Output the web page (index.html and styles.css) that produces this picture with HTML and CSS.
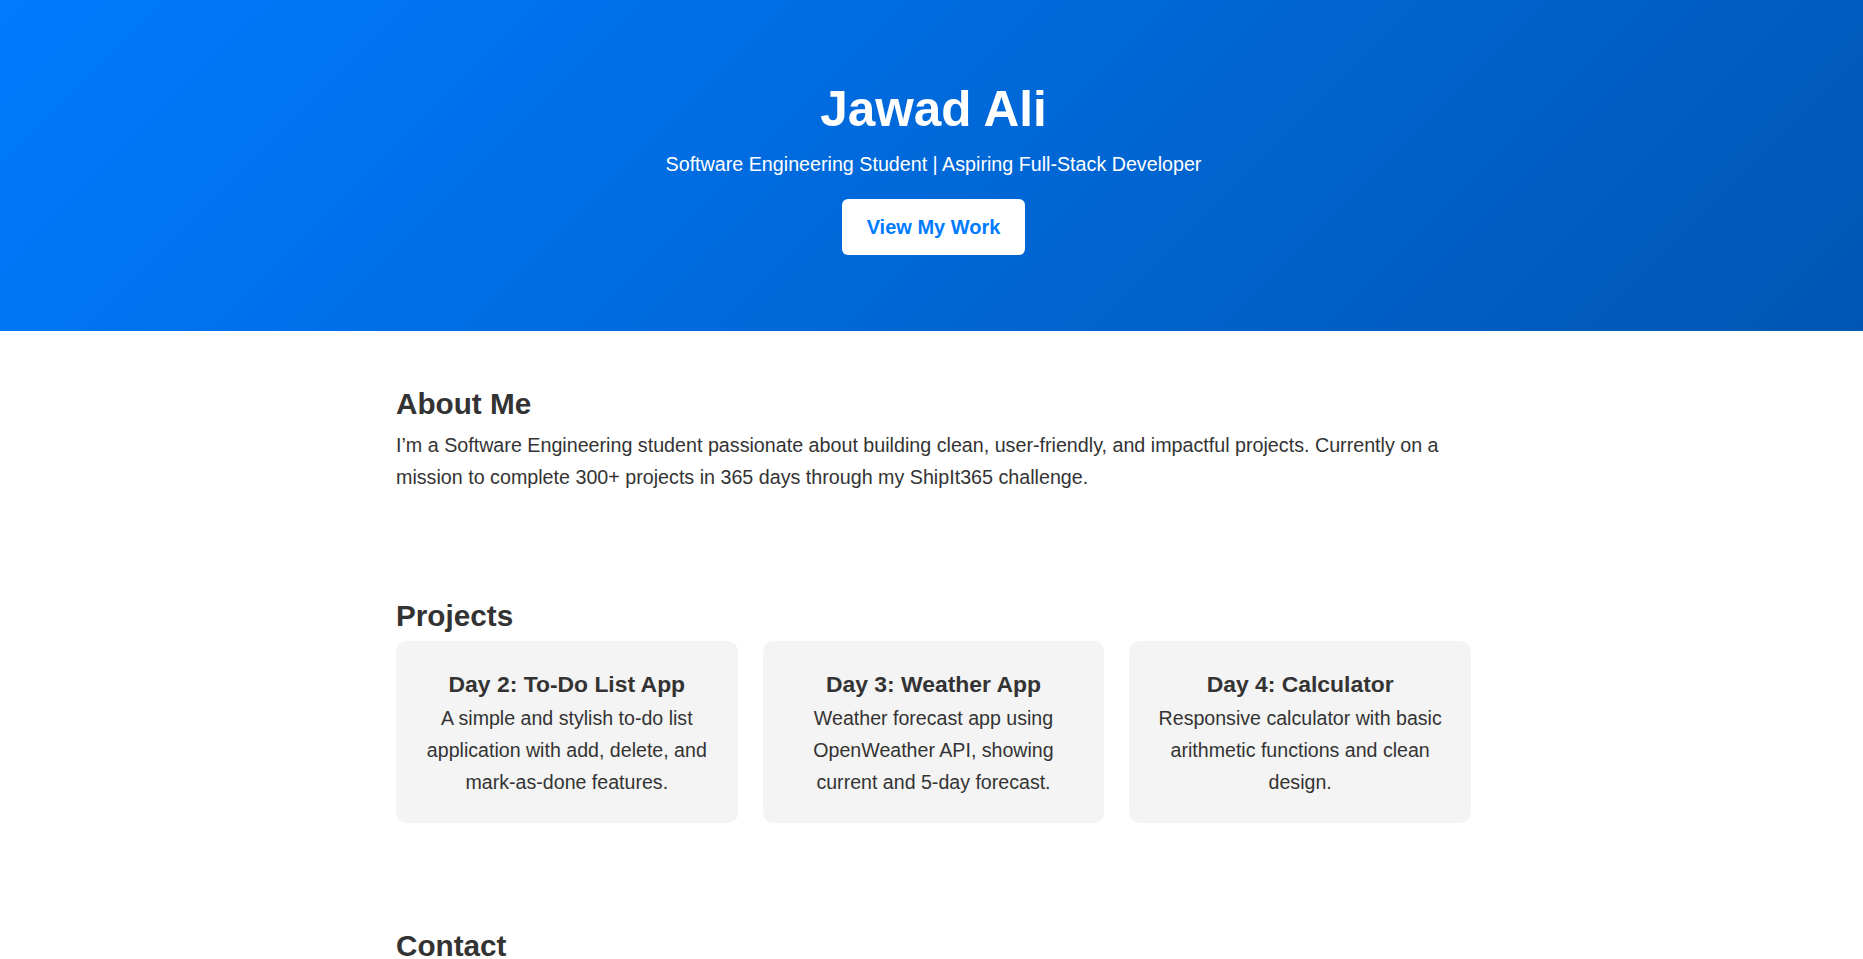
FILE: index.html
```html
<!DOCTYPE html>
<html lang="en">
<head>
<meta charset="UTF-8">
<title>Jawad Ali | Portfolio</title>
<link rel="stylesheet" href="styles.css">
</head>
<body>
  <header class="hero">
    <h1 class="hero-title">Jawad Ali</h1>
    <p class="hero-subtitle">Software Engineering Student | Aspiring Full-Stack Developer</p>
    <a class="hero-button" href="#projects">View My Work</a>
  </header>

  <main class="main">
    <section class="section" id="about">
      <h2 class="section-title">About Me</h2>
      <p class="section-text">I’m a Software Engineering student passionate about building clean, user-friendly, and impactful projects. Currently on a mission to complete 300+ projects in 365 days through my ShipIt365 challenge.</p>
    </section>

    <section class="section" id="projects">
      <h2 class="section-title">Projects</h2>
      <div class="project-grid">
        <div class="project-card">
          <h3 class="project-title">Day 2: To-Do List App</h3>
          <p class="project-text">A simple and stylish to-do list application with add, delete, and mark-as-done features.</p>
        </div>
        <div class="project-card">
          <h3 class="project-title">Day 3: Weather App</h3>
          <p class="project-text">Weather forecast app using OpenWeather API, showing current and 5-day forecast.</p>
        </div>
        <div class="project-card">
          <h3 class="project-title">Day 4: Calculator</h3>
          <p class="project-text">Responsive calculator with basic arithmetic functions and clean design.</p>
        </div>
      </div>
    </section>

    <section class="section" id="contact">
      <h2 class="section-title">Contact</h2>
    </section>
  </main>
</body>
</html>
```

FILE: styles.css
```css
* {
  box-sizing: border-box;
}

html, body {
  margin: 0;
  padding: 0;
}

body {
  font-family: "Liberation Sans", Arial, sans-serif;
  color: #333;
  background: #fff;
  font-size: 19.6px;
  line-height: 32px;
}

.hero {
  background: linear-gradient(135deg, #007bff, #0056b3);
  color: #fff;
  text-align: center;
  padding: 80px 0 76px 4px;
  display: flex;
  flex-direction: column;
  align-items: center;
}

.hero-title {
  margin: 0;
  font-size: 49.5px;
  font-weight: bold;
  line-height: 57.5px;
}

.hero-subtitle {
  margin: 15px 0 0;
  font-size: 19.7px;
  line-height: 23px;
}

.hero-button {
  margin-top: 23.5px;
  display: inline-block;
  background: #fff;
  color: #007bff;
  font-size: 20px;
  font-weight: bold;
  line-height: 24px;
  padding: 16px 25px;
  border-radius: 6px;
  text-decoration: none;
}

.main {
  padding: 56px 0 0 4px;
}

.section {
  max-width: 1075px;
  margin: 0 auto 105.5px;
}

.section-title {
  margin: 0 0 7.5px;
  font-size: 29.7px;
  font-weight: bold;
  line-height: 34.5px;
  color: #333;
}

.section-text {
  margin: 0;
  font-size: 19.7px;
  line-height: 32px;
}

.project-grid {
  display: grid;
  grid-template-columns: repeat(3, 1fr);
  gap: 25px;
}

.project-card {
  background: #f4f4f4;
  border-radius: 10px;
  padding: 25px;
  text-align: center;
}

.project-title {
  margin: 5px 0;
  font-size: 22.9px;
  font-weight: bold;
  line-height: 26.9px;
}

.project-text {
  margin: 0;
  font-size: 19.6px;
  line-height: 32px;
}
```
